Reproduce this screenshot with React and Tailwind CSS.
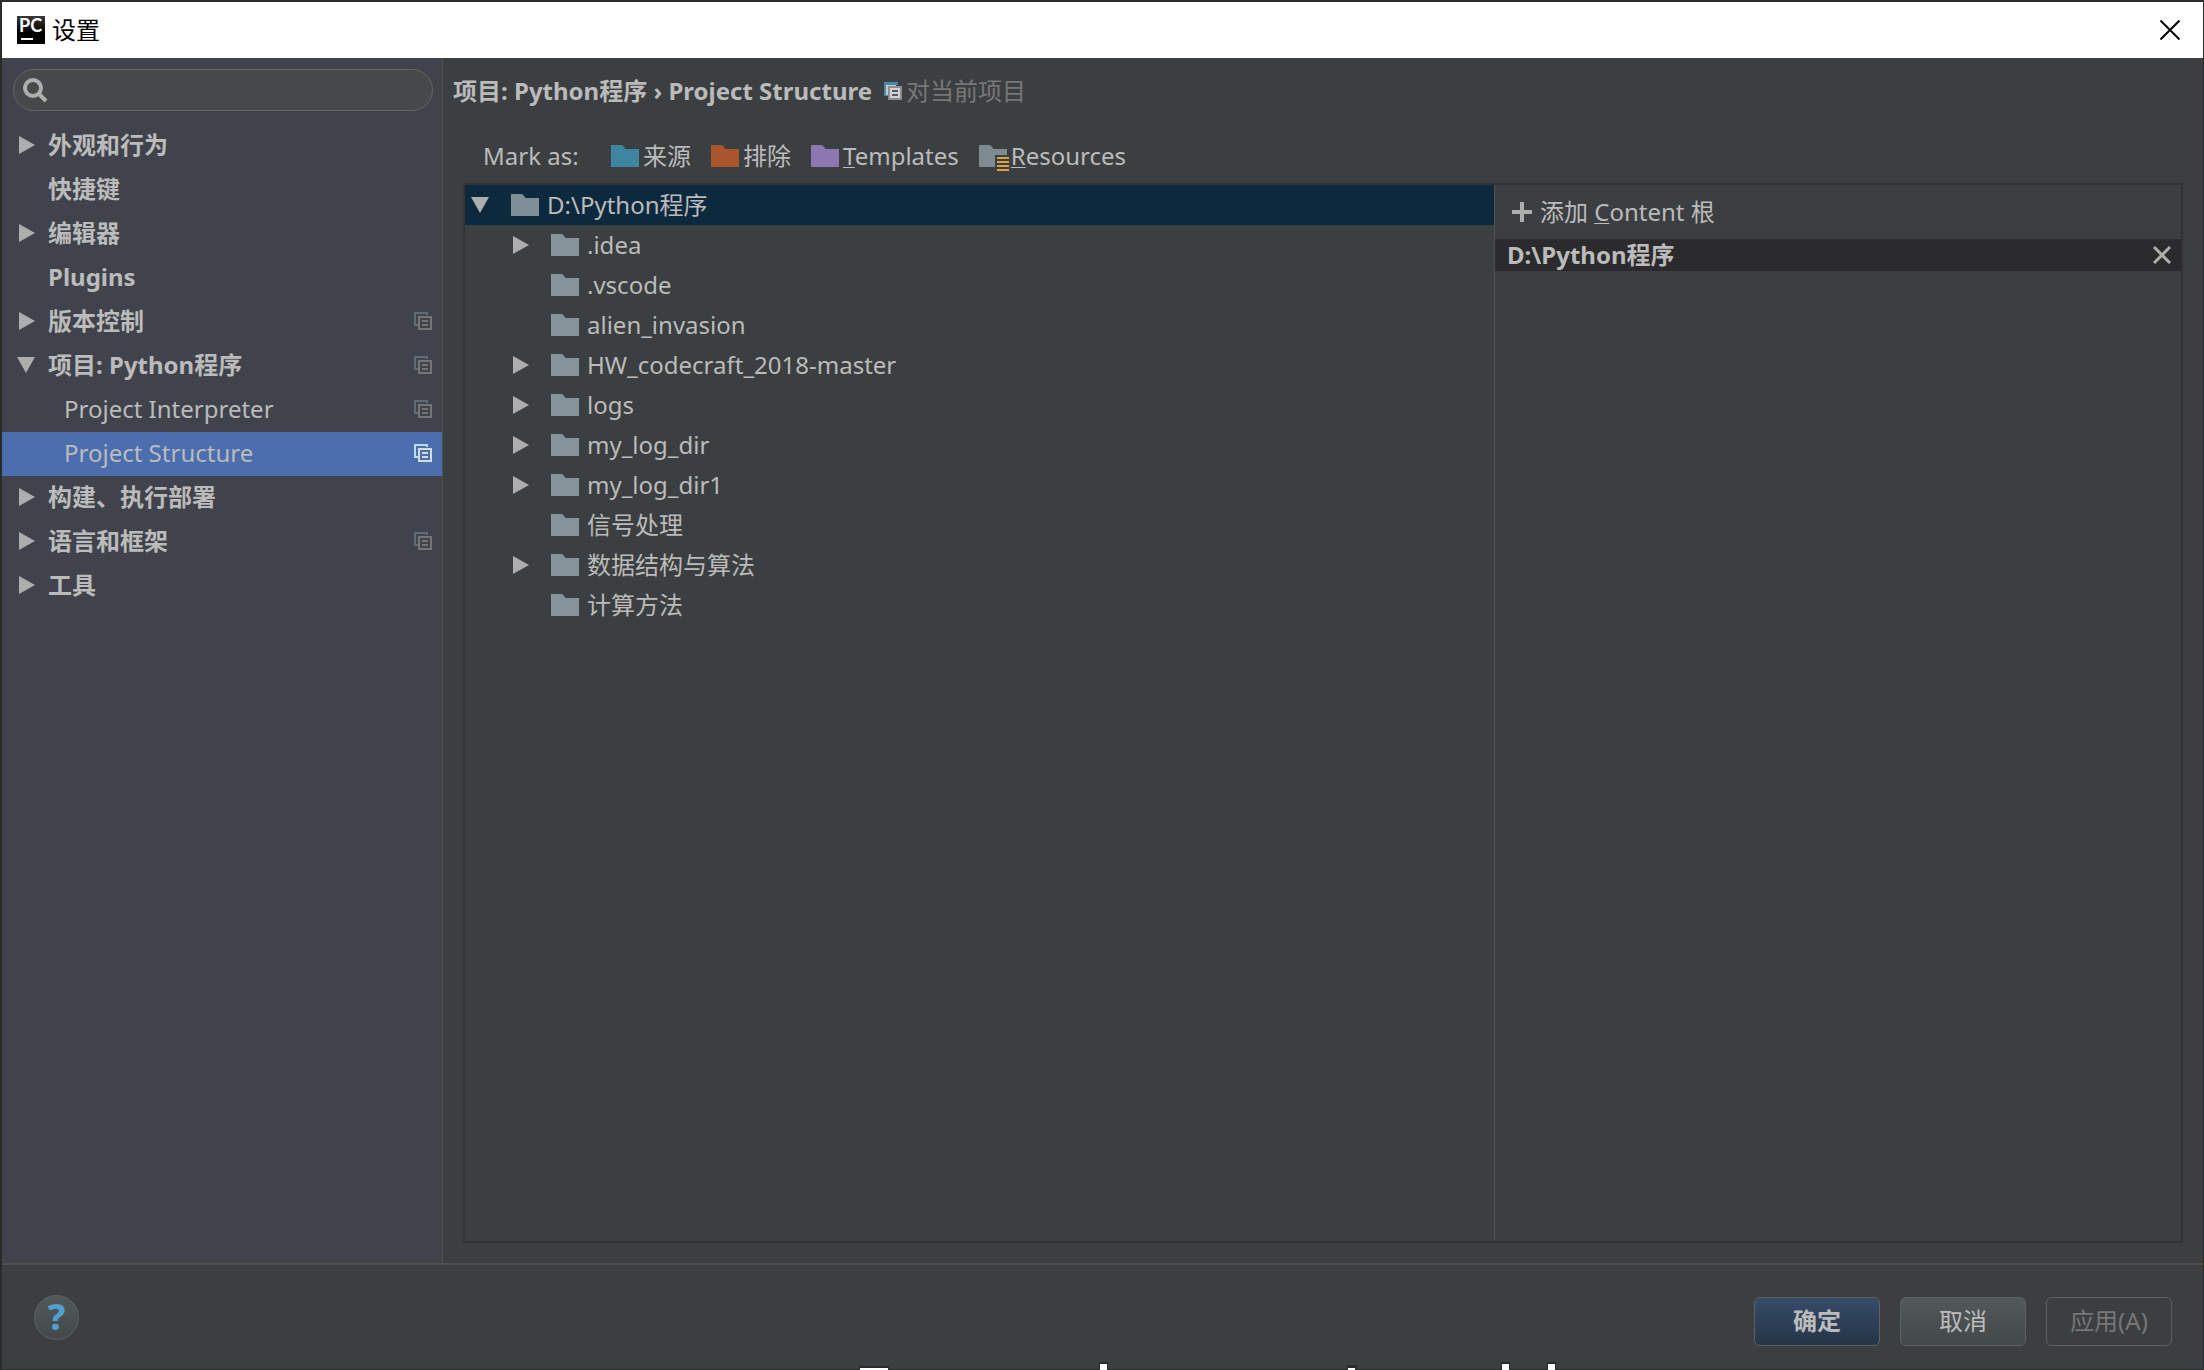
import React from "react";

const settings = [
  { label: "外观和行为", arrow: "right" },
  { label: "快捷键" },
  { label: "编辑器", arrow: "right" },
  { label: "Plugins" },
  { label: "版本控制", arrow: "right", perProject: true },
  { label: "项目: Python程序", arrow: "down", perProject: true },
  { label: "Project Interpreter", child: true, perProject: true },
  { label: "Project Structure", child: true, perProject: true, selected: true },
  { label: "构建、执行部署", arrow: "right" },
  { label: "语言和框架", arrow: "right", perProject: true },
  { label: "工具", arrow: "right" },
];

const folders = [
  { name: ".idea", arrow: true },
  { name: ".vscode" },
  { name: "alien_invasion" },
  { name: "HW_codecraft_2018-master", arrow: true },
  { name: "logs", arrow: true },
  { name: "my_log_dir", arrow: true },
  { name: "my_log_dir1", arrow: true },
  { name: "信号处理" },
  { name: "数据结构与算法", arrow: true },
  { name: "计算方法" },
];

function Arrow({ dir }) {
  return (
    <svg width="18" height="18" viewBox="0 0 18 18" fill="#adadad" className="shrink-0" aria-hidden="true">
      {dir === "right" && <path d="M2 0 18 9 2 18z" />}
      {dir === "down" && <path d="M0 1h18L9 17z" />}
    </svg>
  );
}

function Folder({ color = "#87939a", lines = false }) {
  return (
    <svg width="28" height="22" viewBox="0 0 28 22" className="shrink-0 overflow-visible" aria-hidden="true">
      {lines ? (
        <>
          <path d="M0 0h10q2 0 3 2l1.500 2H28v6H16v12H0z" fill={color} />
          <path d="M18 12h12v2H18zM18 16h12v2H18zM18 20h12v2H18zM18 24h12v2H18z" fill="#d9a343" />
        </>
      ) : (
        <path d="M0 0h10q2 0 3 2l1.500 2H28v18H0z" fill={color} />
      )}
    </svg>
  );
}

function CopyIcon({ selected }) {
  return (
    <svg width="18" height="18" viewBox="0 0 18 18" fill="none" strokeWidth="2" className="shrink-0" aria-hidden="true">
      <path d="M4 13H1V1h12v2" stroke={selected ? "#b4dcf5" : "#5d6d78"} />
      <path d="M5 5h12v12H5zM8 9h6M8 13h6" stroke={selected ? "#d9d9d9" : "#757575"} />
    </svg>
  );
}

function MarkButton({ color, lines, children }) {
  return (
    <button type="button" className="flex items-center gap-1">
      <Folder color={color} lines={lines} />
      <span>{children}</span>
    </button>
  );
}

function Mnemonic({ children }) {
  return <span className="underline decoration-1 underline-offset-2">{children}</span>;
}

export default function App() {
  return (
    <div className="relative h-screen overflow-hidden">
      <div className="flex h-full flex-col border-t-2 border-r border-b border-l-2 border-[#2b2b2b] bg-[#3c3f41] font-['Noto_Sans','Noto_Sans_CJK_SC',sans-serif] text-2xl leading-8 text-[#bbbbbb]">
        <header className="flex h-14 shrink-0 items-center bg-white pr-[15px] pl-[15px] text-black">
          <svg width="28" height="28" viewBox="0 0 28 28" className="overflow-visible" aria-hidden="true">
            <defs>
              <linearGradient id="logo" x1="0" y1="0" x2="0" y2="1">
                <stop offset="0" stopColor="#3a3a3a" />
                <stop offset="0.6" stopColor="#000" />
              </linearGradient>
            </defs>
            <rect width="28" height="28" fill="url(#logo)" />
            <text x="2" y="16" fontSize="18" fontWeight="700" fontFamily="Lato" fill="#fff">PC</text>
            <rect x="4" y="22" width="12" height="2" fill="#fff" />
          </svg>
          <h1 className="ml-[7px] flex-1">设置</h1>
          <button type="button" aria-label="关闭" className="p-2">
            <svg width="20" height="20" viewBox="0 0 20 20" stroke="#000" strokeWidth="2" aria-hidden="true">
              <path d="M.5.5l19 19M19.500.5l-19 19" />
            </svg>
          </button>
        </header>

        <div className="flex min-h-0 flex-1">
          <nav className="w-[441px] shrink-0 border-r border-[#515151] bg-[#40434c]">
            <label className="mt-[11px] mr-[9px] mb-[13px] ml-[11px] flex h-[42px] items-center rounded-full border border-[#646464] bg-[#45494a] pl-2">
              <svg width="26" height="26" viewBox="0 0 26 26" fill="none" stroke="#adadad" strokeWidth="4" aria-hidden="true">
                <circle cx="11" cy="11" r="8" />
                <path d="M16.500 16.500l7.500 7.500" />
              </svg>
              <input type="text" aria-label="搜索" className="min-w-0 flex-1 bg-transparent px-2 outline-none" />
            </label>
            <ul>
              {settings.map((s) => (
                <li key={s.label}>
                  <button
                    type="button"
                    className={`flex h-11 w-full items-center pr-[10px] pb-[2px] pl-[15px] text-left ${s.selected ? "bg-[#4b6eaf]" : ""}`}
                  >
                    <Arrow dir={s.arrow} />
                    <span className={`flex-1 ${s.child ? "ml-[29px]" : "ml-[13px] font-bold"}`}>{s.label}</span>
                    {s.perProject && <CopyIcon selected={s.selected} />}
                  </button>
                </li>
              ))}
            </ul>
          </nav>

          <main className="flex min-w-0 flex-1 flex-col pt-[17px] pr-5 pb-5 pl-5">
            <div className="-ml-[10px] flex items-center">
              <h2 className="font-bold">项目: Python程序 › Project Structure</h2>
              <svg width="18" height="18" viewBox="0 0 18 18" className="mr-1 ml-3" aria-hidden="true">
                <path d="M0 0h14v3H4v11H0z" fill="#4d86a8" />
                <path d="M2 3h10v2H6v8H2z" fill="#c3c9cc" />
                <path d="M4 4h14v14H4z" fill="#8b8d8e" />
                <path d="M6 6h10v10H6z" fill="#d2d2d2" />
                <path d="M8 9h6M8 13h6" stroke="#55585a" strokeWidth="2" />
              </svg>
              <span className="text-[#777777]">对当前项目</span>
            </div>

            <div className="mt-[33px] mb-[11px] ml-5 flex items-center">
              <span className="w-32">Mark as:</span>
              <div className="flex items-center gap-5">
                <MarkButton color="#3e86a0">来源</MarkButton>
                <MarkButton color="#aa562d">排除</MarkButton>
                <MarkButton color="#8d77b0">
                  <Mnemonic>T</Mnemonic>emplates
                </MarkButton>
                <MarkButton color="#7f8b91" lines>
                  <Mnemonic>R</Mnemonic>esources
                </MarkButton>
              </div>
            </div>

            <div className="flex min-h-0 flex-1 border-2 border-[#323232]">
              <ul className="min-w-0 flex-[3]">
                <li>
                  <button type="button" className="flex h-10 w-full items-center bg-[#0d293e] pl-[6px] text-left">
                    <Arrow dir="down" />
                    <span className="ml-[22px] flex items-center gap-2">
                      <Folder color="#7f8f98" />
                      D:\Python程序
                    </span>
                  </button>
                </li>
                {folders.map((f) => (
                  <li key={f.name}>
                    <button type="button" className="flex h-10 w-full items-center pl-[46px] text-left">
                      <Arrow dir={f.arrow ? "right" : ""} />
                      <span className="ml-[22px] flex items-center gap-2">
                        <Folder />
                        {f.name}
                      </span>
                    </button>
                  </li>
                ))}
              </ul>
              <section className="min-w-0 flex-[2] border-l border-[#515151]">
                <button type="button" className="mt-[11px] mb-[11px] ml-[17px] flex items-center gap-2">
                  <svg width="20" height="20" viewBox="0 0 20 20" stroke="#adadad" strokeWidth="4" aria-hidden="true">
                    <path d="M10 0v20M0 10h20" />
                  </svg>
                  <span>
                    添加 <Mnemonic>C</Mnemonic>ontent 根
                  </span>
                </button>
                <div className="flex h-8 items-center justify-between bg-[#2b2b2d] pr-[10px] pl-3">
                  <span className="font-bold">D:\Python程序</span>
                  <button type="button" aria-label="移除">
                    <svg width="18" height="18" viewBox="0 0 18 18" stroke="#adadad" strokeWidth="3" aria-hidden="true">
                      <path d="M1 1l16 16M17 1L1 17" />
                    </svg>
                  </button>
                </div>
              </section>
            </div>
          </main>
        </div>

        <footer className="flex h-[106px] shrink-0 items-center border-t-2 border-[#515151] pr-[31px] pl-8">
          <button
            type="button"
            aria-label="帮助"
            className="mr-auto flex size-[45px] items-center justify-center rounded-full border border-[#606262] bg-linear-to-b from-[#53585a] to-[#43484a] text-4xl font-extrabold text-[#4f9fcf]"
          >
            ?
          </button>
          <div className="flex gap-5 pt-2">
            <button type="button" className="h-[49px] w-[126px] rounded-md border border-[#5d6163] bg-linear-to-b from-[#364c69] to-[#263547] font-bold">
              确定
            </button>
            <button type="button" className="h-[49px] w-[126px] rounded-md border border-[#5d6163] bg-linear-to-b from-[#53585a] to-[#43484a]">
              取消
            </button>
            <button type="button" disabled className="h-[49px] w-[126px] rounded-md border border-[#5d6163] text-[#777777]">
              应用(A)
            </button>
          </div>
        </footer>
      </div>

      <svg width="700" height="8" viewBox="0 0 700 8" className="absolute bottom-0 left-[858px]" aria-hidden="true">
        <path d="M1 4h30v4H1zM241 0h9v8h-9zM489 3h10v5h-10zM643 0h9v8h-9zM689 0h9v8h-9z" fill="#2b2b2d" />
        <path d="M2 6h28v2H2zM242 2h7v6h-7zM490 6h7v2h-7zM644 2h7v6h-7zM690 2h7v6h-7z" fill="#fff" />
      </svg>
    </div>
  );
}
